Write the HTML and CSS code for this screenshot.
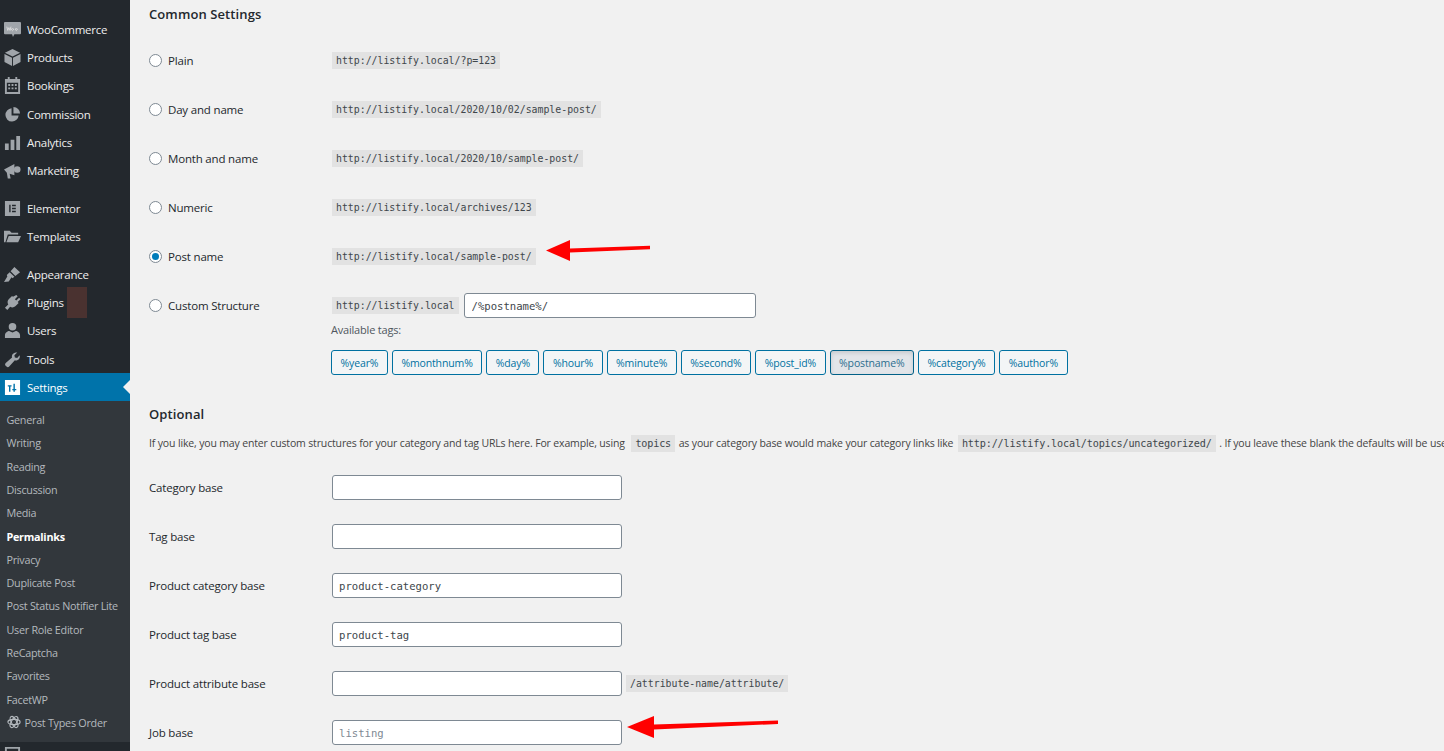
FILE: index.html
```html
<!DOCTYPE html>
<html lang="en">
<head>
<meta charset="utf-8">
<title>Permalink Settings</title>
<link rel="stylesheet" href="styles.css">
</head>
<body>
<div class="shell">
  <nav class="sidebar">
    <ul class="menu">
      <li class="item"><svg class="ico" viewBox="0 0 18 18"><path d="M1 1h16a1 1 0 0 1 1 1v11a1 1 0 0 1-1 1h-6l-1.500 3-1-3H1a1 1 0 0 1-1-1V2a1 1 0 0 1 1-1z"/><path class="cut" d="M3 6l1 4 1.200-3 1.200 3 1-4M9 8a1 1 0 1 0 .01 0M13 8a1 1 0 1 0 .01 0"/></svg><span>WooCommerce</span></li>
      <li class="item"><svg class="ico" viewBox="0 0 18 18"><path d="M9 0l8 4-8 4-8-4z"/><path d="M.500 5.200l8 4V18l-8-4.200zM17.500 5.200l-8 4V18l8-4.200z"/></svg><span>Products</span></li>
      <li class="item"><svg class="ico" viewBox="0 0 18 18"><path d="M4 0h2v2h6V0h2v2h3v16H1V2h3zM3 6v10h12V6zM4.500 7.500h2v2h-2zM8 7.500h2v2H8zM11.500 7.500h2v2h-2zM4.500 11h2v2h-2zM8 11h2v2H8zM11.500 11h2v2h-2z" fill-rule="evenodd"/></svg><span>Bookings</span></li>
      <li class="item"><svg class="ico" viewBox="0 0 18 18"><path d="M8 2.500a7 7 0 1 0 7.500 7.500H8z"/><path d="M10 1a7 7 0 0 1 7 7h-7z"/></svg><span>Commission</span></li>
      <li class="item"><svg class="ico" viewBox="0 0 18 18"><path d="M1 10h4v7H1zM7 6h4v11H7zM13 2h4v15h-4z"/></svg><span>Analytics</span></li>
      <li class="item"><svg class="ico" viewBox="0 0 18 18"><path d="M0 8l11-6v12l-5-1.500 1 5H4l-1-6z"/><circle cx="14" cy="8" r="3.500"/></svg><span>Marketing</span></li>
      <li class="gap"></li>
      <li class="item"><svg class="ico" viewBox="0 0 18 18"><path fill-rule="evenodd" d="M1 1h16v16H1zM5.500 5v8H7V5zM8.500 5v1.500h4V5zM8.500 8.200v1.500h4V8.200zM8.500 11.500V13h4v-1.500z"/></svg><span>Elementor</span></li>
      <li class="item"><svg class="ico" viewBox="0 0 18 18"><path d="M0 3h6l2 2h7v2H4L1.500 15H0zM5 8.500h13L15 15H2.500z"/></svg><span>Templates</span></li>
      <li class="gap"></li>
      <li class="item"><svg class="ico" viewBox="0 0 18 18"><path d="M11 1l6 5.500-5 4-5-5zM6 6.500l5 5-2 1.500-1-1-3 4.500L0 17l3.500-6L3 9.500z"/></svg><span>Appearance</span></li>
      <li class="item plugins"><svg class="ico" viewBox="0 0 18 18"><path d="M13 1l1.500 1.500-3 3 1.500 1.500 3-3L17.500 5.500l-3 3 1 1-3.500 3.500c-1.500 1.500-4 1.500-5.500.500L3.500 17 1 14.500l3.500-3.500C3.500 9.500 3.500 7 5 5.500L8.500 2l1 1z"/></svg><span>Plugins</span><i class="blot"></i></li>
      <li class="item"><svg class="ico" viewBox="0 0 18 18"><circle cx="9" cy="5" r="4"/><path d="M1 17v-3c0-2.500 3-4.500 4.500-4.500L9 11l3.500-1.500c1.500 0 4.500 2 4.500 4.500v3z"/></svg><span>Users</span></li>
      <li class="item"><svg class="ico" viewBox="0 0 18 18"><path d="M16.500 4.500c.8 2-.2 4.500-2.500 5.300-1 .3-1.800.2-2.500 0L5.500 16.500c-.8.800-2 .8-2.800 0L1.700 15.500c-.8-.8-.7-2 .1-2.800L8.500 7c-.3-.9-.3-2 .2-3C9.700 2 12 1 14 1.700L11 4.500l.5 2.500 2.500.5z"/></svg><span>Tools</span></li>
      <li class="item current"><svg class="ico" viewBox="0 0 18 18"><path fill-rule="evenodd" d="M1 1h16v16H1zM4 6.500v1.500h1.300v5.500h1.500V8H8V6.500zM10 5v5.500H8.800V12H10v1.500h1.500V12H13v-1.500h-1.500V5z"/></svg><span>Settings</span></li>
    </ul>
    <ul class="submenu">
      <li>General</li>
      <li>Writing</li>
      <li>Reading</li>
      <li>Discussion</li>
      <li>Media</li>
      <li class="active">Permalinks</li>
      <li>Privacy</li>
      <li>Duplicate Post</li>
      <li>Post Status Notifier Lite</li>
      <li>User Role Editor</li>
      <li>ReCaptcha</li>
      <li>Favorites</li>
      <li>FacetWP</li>
      <li class="with-icon"><svg class="mini" viewBox="0 0 16 16"><g fill="none" stroke="currentColor" stroke-width="1.300"><ellipse cx="8" cy="8" rx="7" ry="3"/><ellipse cx="8" cy="8" rx="7" ry="3" transform="rotate(60 8 8)"/><ellipse cx="8" cy="8" rx="7" ry="3" transform="rotate(120 8 8)"/></g></svg>Post Types Order</li>
    </ul>
    <div class="next-item"><svg class="ico" viewBox="0 0 18 18"><path fill-rule="evenodd" d="M1 1h16v16H1zM3 3v12h12V3z"/></svg></div>
  </nav>

  <main class="content">
    <h2 class="heading first">Common Settings</h2>

    <div class="options">
      <div class="row"><label class="lab"><input type="radio" name="p"><span>Plain</span></label><code>http://listify.local/?p=123</code></div>
      <div class="row"><label class="lab"><input type="radio" name="p"><span>Day and name</span></label><code>http://listify.local/2020/10/02/sample-post/</code></div>
      <div class="row"><label class="lab"><input type="radio" name="p"><span>Month and name</span></label><code>http://listify.local/2020/10/sample-post/</code></div>
      <div class="row"><label class="lab"><input type="radio" name="p"><span>Numeric</span></label><code>http://listify.local/archives/123</code></div>
      <div class="row"><label class="lab"><input type="radio" name="p" checked><span>Post name</span></label><code>http://listify.local/sample-post/</code>
        <svg class="arrow arrow-a" viewBox="0 0 106 24"><path d="M0 11.500L24 1v8.500l80-2.700v3.500L24 13.500V22z"/></svg>
      </div>
      <div class="row"><label class="lab"><input type="radio" name="p"><span>Custom Structure</span></label><code>http://listify.local</code><input class="field wide" type="text" value="/%postname%/"></div>
    </div>

    <div class="tags-block">
      <p class="avail">Available tags:</p>
      <div class="tags">
        <button class="tag">%year%</button>
        <button class="tag">%monthnum%</button>
        <button class="tag">%day%</button>
        <button class="tag">%hour%</button>
        <button class="tag">%minute%</button>
        <button class="tag">%second%</button>
        <button class="tag">%post_id%</button>
        <button class="tag on">%postname%</button>
        <button class="tag">%category%</button>
        <button class="tag">%author%</button>
      </div>
    </div>

    <h2 class="heading">Optional</h2>
    <p class="desc">If you like, you may enter custom structures for your category and tag URLs here. For example, using <code>topics</code> as your category base would make your category links like <code>http://listify.local/topics/uncategorized/</code> . If you leave these blank the defaults will be used.</p>

    <div class="bases">
      <div class="row"><span class="lab">Category base</span><input class="field" type="text"></div>
      <div class="row"><span class="lab">Tag base</span><input class="field" type="text"></div>
      <div class="row"><span class="lab">Product category base</span><input class="field" type="text" value="product-category"></div>
      <div class="row"><span class="lab">Product tag base</span><input class="field" type="text" value="product-tag"></div>
      <div class="row"><span class="lab">Product attribute base</span><input class="field" type="text"><code class="suffix">/attribute-name/attribute/</code></div>
      <div class="row"><span class="lab">Job base</span><input class="field" type="text" placeholder="listing">
        <svg class="arrow arrow-b" viewBox="0 0 152 24"><path d="M0 12L27 1v8.500l124-4v3.500L27 14.500V23z"/></svg>
      </div>
    </div>
  </main>
</div>
</body>
</html>
```
FILE: styles.css
```css
* { box-sizing: border-box; }
html, body { margin: 0; height: 751px; overflow: hidden; }
body { background: #f1f1f1; color: #32373c; font-family: "Open Sans", "Noto Sans", sans-serif; font-size: 11.5px; }
.shell { display: flex; height: 751px; }
ul { list-style: none; margin: 0; padding: 0; }

.sidebar { width: 130px; flex: none; background: #23282d; display: flex; flex-direction: column; padding-top: 15px; overflow: hidden; }
.item { position: relative; height: 28.3px; display: flex; align-items: center; padding-left: 4px; gap: 6px; color: #eee; white-space: nowrap; letter-spacing: -.27px; }
.ico { width: 17px; height: 17px; flex: none; fill: #a0a5aa; }
.cut { fill: none; stroke: #e0e0e0; stroke-width: .9; }
.gap { height: 9.300px; }
.current { background: #0073aa; color: #fff; }
.current .ico { fill: #fff; }
.current::after { content: ""; position: absolute; right: 0; top: 50%; margin-top: -7px; border: 7px solid transparent; border-right-color: #f1f1f1; border-left-width: 0; }
.blot { position: absolute; left: 67px; top: -1px; width: 20px; height: 31px; background: #4a3230; }
.submenu { background: #32373c; padding: 6.500px 0 7.500px; color: #b4b9be; }
.submenu li { height: 23.3px; display: flex; align-items: center; padding-left: 6.500px; white-space: nowrap; font-size: 10.8px; letter-spacing: -.27px; }
.submenu .active { color: #fff; font-weight: 700; }
.submenu .with-icon { gap: 4px; }
.mini { width: 14px; height: 14px; flex: none; }
.next-item { padding: 4px 0 0 4px; }

.content { flex: 1; min-width: 0; overflow: hidden; padding: 0 0 0 19px; }
.heading { margin: 0; font-size: 13px; font-weight: 600; color: #23282d; line-height: 18px; letter-spacing: .1px; }
.first { padding-top: 5px; height: 36px; }
.row { position: relative; display: flex; align-items: center; height: 49px; white-space: nowrap; }
.lab { width: 183px; flex: none; display: flex; align-items: center; gap: 6px; color: #23282d; letter-spacing: -.18px; }
input[type="radio"] { appearance: none; width: 13px; height: 13px; margin: 0; border: 1px solid #7e8993; border-radius: 50%; background: #fff; flex: none; display: grid; place-items: center; }
input[type="radio"]:checked::before { content: ""; width: 7px; height: 7px; border-radius: 50%; background: #007cba; }
code { font-family: "DejaVu Sans Mono", "Liberation Mono", monospace; font-size: 9.850px; background: #e2e2e2; color: #40464b; padding: 3px 4px; line-height: 11px; }
.field { width: 290px; height: 25px; margin: 0; border: 1px solid #7e8993; border-radius: 3px; background: #fff; color: #40464b; padding: 0 6px; font-family: "DejaVu Sans Mono", "Liberation Mono", monospace; font-size: 10.600px; outline: 0; }
.field::placeholder { color: #7e8993; }
.wide { width: 292px; margin-left: 5px; padding-left: 7px; }
.suffix { margin-left: 4px; }
.tags-block { margin-top: -8px; }
.avail { margin: 0 0 12px 182px; line-height: 16px; color: #50575e; font-size: 11px; letter-spacing: -.2px; }
.tags { display: flex; gap: 4px; margin-left: 182px; }
.tag { height: 25px; padding: 0 8.500px; margin: 0; border: 1px solid #0071a1; border-radius: 3px; background: #f3f5f6; color: #0071a1; font-family: "Open Sans", sans-serif; font-size: 10.500px; letter-spacing: -.13px; }
.tag.on { background: #e2e5e9; border-color: #016087; box-shadow: inset 0 2px 4px rgba(0,0,0,.12); color: #2c6e8f; }
.tags-block + .heading { margin-top: 30px; }
.desc { margin: 11px 0 11px; white-space: nowrap; font-size: 10.500px; line-height: 18px; letter-spacing: -.15px; color: #444; }
.desc code { margin: 0 1px 0 4px; font-size: 10.150px; }
.desc code + code { margin-left: 2px; }
.arrow { position: absolute; fill: #f00; }
.arrow-a { left: 397px; top: 7px; width: 106px; height: 24px; }
.arrow-b { left: 478px; top: 7px; width: 152px; height: 24px; }
```
